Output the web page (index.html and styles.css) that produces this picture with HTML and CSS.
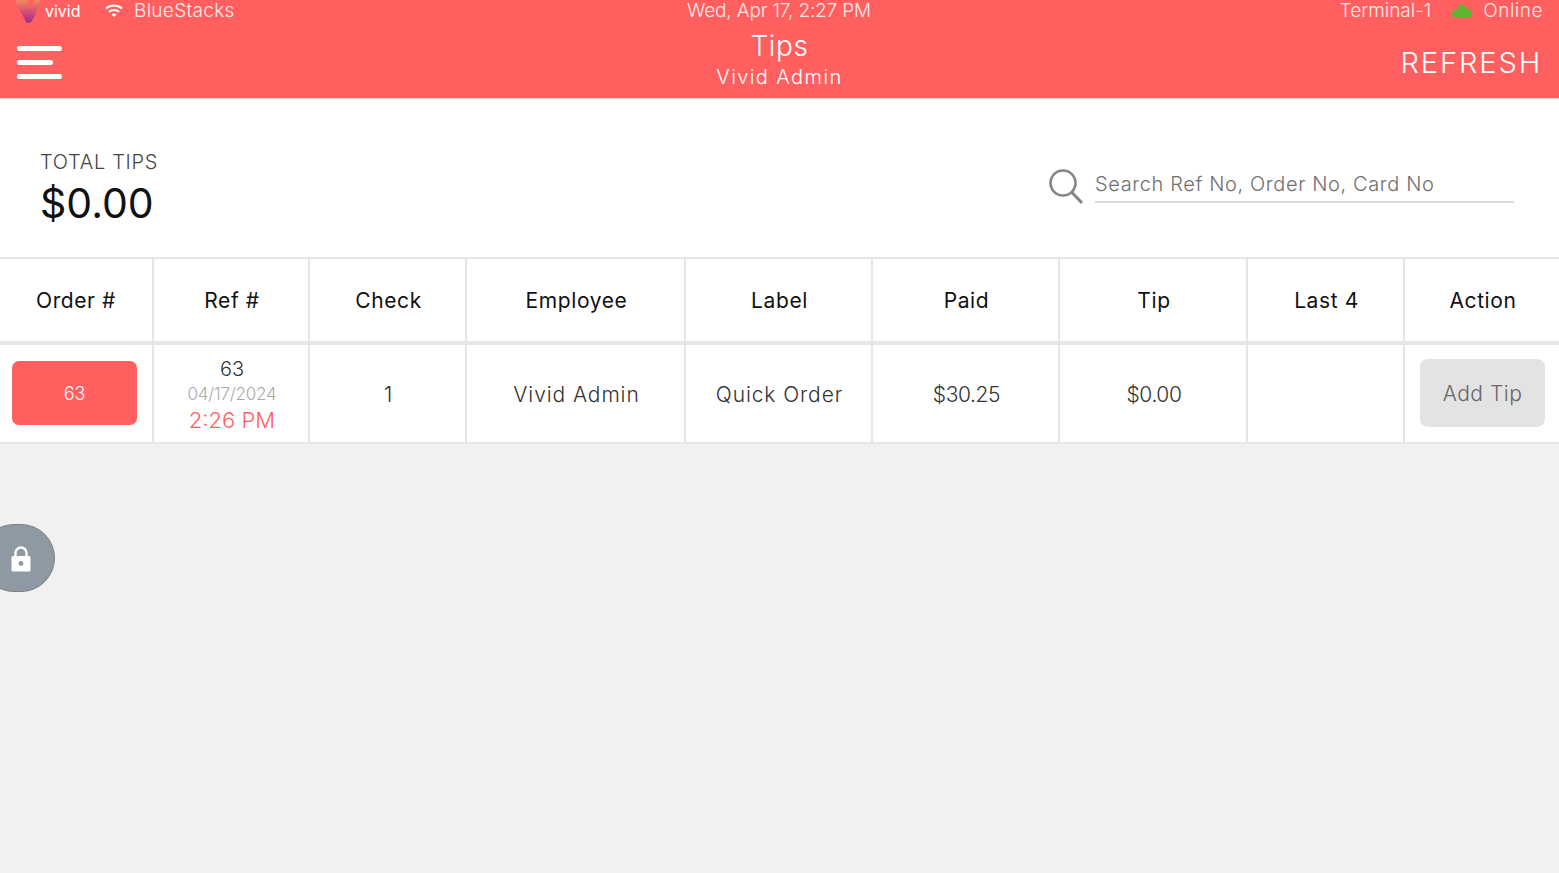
FILE: index.html
```html
<!DOCTYPE html>
<html lang="en">
<head>
    <meta charset="UTF-8">
    <meta name="viewport" content="width=device-width, initial-scale=1.0">
    <title>Tips</title>
    <link rel="stylesheet" href="styles.css">
</head>
<body class="tips-body">
    <header class="tips-header">
        <!-- Status bar -->
        <div class="tips-status">
            <div class="tips-status-left">
                <div class="tips-brand">
                    <svg class="tips-logo" width="26" height="24" viewBox="0 0 26 24">
                        <defs>
                            <linearGradient id="logoGrad" x1="0" y1="0" x2="0" y2="1">
                                <stop offset="0" stop-color="#f08a5c"/>
                                <stop offset="0.55" stop-color="#d24a78"/>
                                <stop offset="1" stop-color="#a0288f"/>
                            </linearGradient>
                        </defs>
                        <path d="M1 0 C2 7 6 12 9 18 C10 21 11 23 13.5 23 C16 23 18 20 20 15 C22 10 24 5 25 0 L19 0 C18.5 4 17 7 15 10 C14 7 13 3 12.5 0 Z" fill="url(#logoGrad)"/>
                    </svg>
                    <span class="tips-brand-name">vivid</span>
                </div>
                <svg class="tips-wifi" width="18" height="14" viewBox="0 0 18 14">
                    <path d="M1 4.5 C5.5 0.5 12.5 0.5 17 4.5" fill="none" stroke="#fff" stroke-width="2"/>
                    <path d="M4 7.7 C6.8 5.3 11.2 5.3 14 7.7" fill="none" stroke="#fff" stroke-width="2"/>
                    <path d="M6.6 10.4 L9 13 L11.4 10.4 C10 9.3 8 9.3 6.6 10.4 Z" fill="#fff"/>
                </svg>
                <span class="tips-carrier">BlueStacks</span>
            </div>
            <div class="tips-status-center">Wed, Apr 17, 2:27 PM</div>
            <div class="tips-status-right">
                <span>Terminal-1</span>
                <svg class="tips-cloud" width="20" height="14" viewBox="0 0 20 14" fill="#5cb531">
                    <circle cx="3.8" cy="9.7" r="3.8"/>
                    <circle cx="10" cy="5" r="4.6"/>
                    <circle cx="15.8" cy="9.3" r="4.2"/>
                    <rect x="3.8" y="7" width="12" height="6.5"/>
                </svg>
                <span class="tips-online">Online</span>
            </div>
        </div>
        <!-- Title bar -->
        <div class="tips-titlebar">
            <div class="tips-menu">
                <span class="tips-menu-line"></span>
                <span class="tips-menu-line tips-menu-short"></span>
                <span class="tips-menu-line"></span>
            </div>
            <div class="tips-title">
                <div class="tips-title-main">Tips</div>
                <div class="tips-title-sub">Vivid Admin</div>
            </div>
            <div class="tips-refresh">REFRESH</div>
        </div>
    </header>

    <section class="tips-summary">
        <div>
            <div class="tips-total-label">TOTAL TIPS</div>
            <div class="tips-total-value">$0.00</div>
        </div>
        <div class="tips-search">
            <svg width="36" height="36" viewBox="0 0 36 36">
                <circle cx="15" cy="14" r="12.5" fill="none" stroke="#858585" stroke-width="2.6"/>
                <path d="M24 23.5 L34 34" fill="none" stroke="#858585" stroke-width="3"/>
            </svg>
            <div class="tips-search-input">Search Ref No, Order No, Card No</div>
        </div>
    </section>

    <div class="tips-table">
        <div class="tips-row tips-row-head">
            <div class="tips-cell">Order #</div>
            <div class="tips-cell">Ref #</div>
            <div class="tips-cell">Check</div>
            <div class="tips-cell">Employee</div>
            <div class="tips-cell">Label</div>
            <div class="tips-cell">Paid</div>
            <div class="tips-cell">Tip</div>
            <div class="tips-cell">Last 4</div>
            <div class="tips-cell">Action</div>
        </div>
        <div class="tips-row tips-row-body">
            <div class="tips-cell"><div class="tips-order-btn">63</div></div>
            <div class="tips-cell tips-ref">
                <div class="tips-ref-no">63</div>
                <div class="tips-ref-date">04/17/2024</div>
                <div class="tips-ref-time">2:26 PM</div>
            </div>
            <div class="tips-cell">1</div>
            <div class="tips-cell">Vivid Admin</div>
            <div class="tips-cell">Quick Order</div>
            <div class="tips-cell tips-num">$30.25</div>
            <div class="tips-cell tips-num">$0.00</div>
            <div class="tips-cell"></div>
            <div class="tips-cell"><div class="tips-add-btn">Add Tip</div></div>
        </div>
    </div>

    <!-- Lock tab over the page -->
    <div class="tips-lock">
        <svg width="22" height="28" viewBox="0 0 22 28">
            <path d="M5.5 12 V8 a5.5 5.5 0 0 1 11 0 V12" fill="none" stroke="#fff" stroke-width="2.4"/>
            <path d="M3 11 H19 a1.5 1.5 0 0 1 1.5 1.5 V25 a1.5 1.5 0 0 1 -1.5 1.5 H3 a1.5 1.5 0 0 1 -1.5 -1.5 V12.5 a1.5 1.5 0 0 1 1.5 -1.5 Z" fill="#fff"/>
            <circle cx="11" cy="18.5" r="2.4" fill="#8f99a3"/>
        </svg>
    </div>
</body>
</html>
```

FILE: styles.css
```css
/* Base */
.tips-body {
    font-family: Inter, 'Open Sans', sans-serif;
    background-color: #f1f1f1;
    margin: 0;
    height: 873px;
    overflow: hidden;
    position: relative;
}

/* Header */
.tips-header {
    background-color: #ff5f5f;
    color: #fff;
    height: 98px;
    border-bottom: 1px solid #f3d0d0;
}

.tips-status {
    display: grid;
    grid-template-columns: 1fr auto 1fr;
    height: 22px;
    line-height: 22px;
    align-items: start;
    padding: 0 16px 0 15px;
    font-size: 19px;
    font-weight: 300;
    color: #ffe9e9;
}

.tips-status-left {
    display: flex;
    align-items: center;
}

.tips-brand {
    display: flex;
    align-items: center;
    width: 90px;
}

.tips-logo {
    margin: 0 4px -2px 0;
}

.tips-brand-name {
    font-size: 16px;
    font-weight: 400;
    color: #fff;
}

.tips-wifi {
    margin-right: 11px;
}

.tips-carrier {
    letter-spacing: 0.3px;
}

.tips-status-center {
    letter-spacing: -0.15px;
}

.tips-status-right {
    display: flex;
    justify-content: flex-end;
    align-items: center;
}

.tips-cloud {
    margin: 0 11px 0 21px;
}

.tips-online {
    letter-spacing: 0.5px;
}

.tips-titlebar {
    display: grid;
    grid-template-columns: 1fr auto 1fr;
    align-items: center;
    padding: 6px 17px 0 17px;
}

.tips-menu {
    margin-top: 7px;
}

.tips-menu-line {
    display: block;
    width: 45px;
    height: 5px;
    border-radius: 3px;
    background-color: #fff;
    margin-bottom: 9px;
}

.tips-menu-short {
    width: 36px;
}

.tips-menu-line:last-child {
    margin-bottom: 0;
}

.tips-title {
    text-align: center;
}

.tips-title-main {
    font-size: 28px;
    font-weight: 300;
    line-height: 36px;
    letter-spacing: 0.6px;
}

.tips-title-sub {
    font-size: 20px;
    font-weight: 300;
    line-height: 26px;
    letter-spacing: 1.4px;
}

.tips-refresh {
    justify-self: end;
    font-size: 29px;
    font-weight: 300;
    letter-spacing: 1.9px;
    margin-top: 6px;
}

/* Summary */
.tips-summary {
    background-color: #fff;
    height: 158px;
    box-sizing: border-box;
    padding: 49px 45px 0 40px;
    display: flex;
    justify-content: space-between;
}

.tips-total-label {
    font-size: 20px;
    font-weight: 300;
    color: #444;
    line-height: 28px;
    letter-spacing: 0.7px;
}

.tips-total-value {
    font-size: 41px;
    color: #111;
    line-height: 54px;
}

.tips-search {
    display: flex;
    align-items: flex-start;
    gap: 11px;
    padding-top: 21px;
}

.tips-search-input {
    width: 419px;
    height: 34px;
    line-height: 31px;
    box-sizing: border-box;
    font-size: 20px;
    font-weight: 300;
    letter-spacing: 0.62px;
    color: #6f6f6f;
    border-bottom: 2px solid #dcdcdc;
}

/* Table */
.tips-table {
    background-color: #fff;
    border-top: 2px solid #e6e6e6;
}

.tips-row {
    display: grid;
    grid-template-columns: 154px 156px 157px 219px 187px 187px 188px 157px 154px;
    text-align: center;
}

.tips-row-head {
    height: 82px;
    border-bottom: 4px solid #e6e6e6;
    font-size: 21px;
    font-weight: 400;
    letter-spacing: 0.6px;
    color: #111;
}

.tips-row-body {
    height: 97px;
    border-bottom: 2px solid #e6e6e6;
    font-size: 21px;
    font-weight: 300;
    letter-spacing: 0.9px;
    color: #333;
}

.tips-cell {
    display: flex;
    align-items: center;
    justify-content: center;
    padding-left: 2px;
    border-right: 2px solid #e6e6e6;
}

.tips-row-body .tips-cell {
    padding-top: 2px;
}

.tips-cell:first-child {
    padding-left: 0;
}

.tips-cell:last-child {
    border-right: none;
}

.tips-num {
    letter-spacing: -0.4px;
}

.tips-order-btn {
    width: 125px;
    height: 64px;
    margin: -3px 3px 0 0;
    border-radius: 7px;
    background-color: #ff5f5f;
    color: #fff;
    font-size: 18px;
    letter-spacing: 0;
    line-height: 66px;
}

.tips-ref {
    flex-direction: column;
    letter-spacing: 0;
}

.tips-ref-no {
    font-size: 20px;
    line-height: 25px;
}

.tips-ref-date {
    font-size: 17px;
    color: #aaa;
    letter-spacing: -0.2px;
    line-height: 25px;
}

.tips-ref-time {
    font-size: 22px;
    color: #ff5f5f;
    line-height: 26px;
}

.tips-add-btn {
    width: 125px;
    height: 68px;
    margin: -3px 1px 0 0;
    border-radius: 8px;
    background-color: #e3e3e3;
    color: #666;
    letter-spacing: 0.5px;
    line-height: 70px;
}

/* Lock tab */
.tips-lock {
    position: absolute;
    left: -20px;
    top: 524px;
    width: 75px;
    height: 68px;
    box-sizing: border-box;
    border: 1px solid #7f7f7f;
    border-radius: 34px;
    background-color: #8f99a3;
    display: flex;
    align-items: center;
    justify-content: center;
}

.tips-lock svg {
    margin: 1px 0 0 7px;
}
```
